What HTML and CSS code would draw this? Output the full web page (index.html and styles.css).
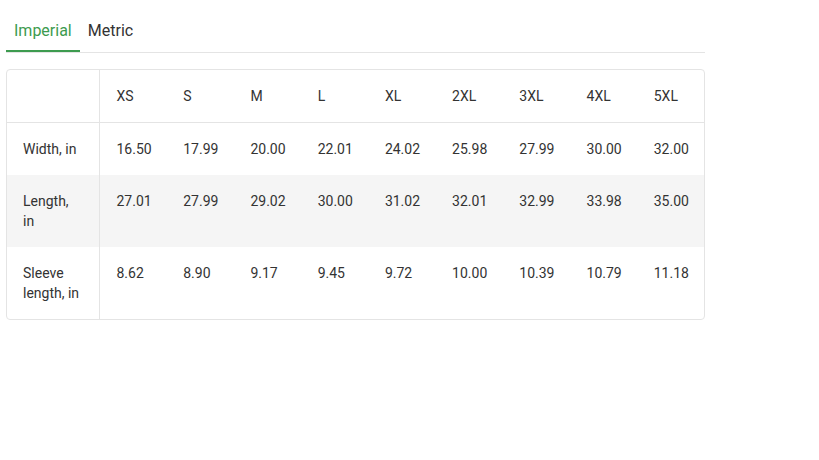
FILE: index.html
```html
<!DOCTYPE html>
<html>
<head>
<meta charset="utf-8">
<link rel="stylesheet" href="styles.css">
</head>
<body>
<div class="wrap">
  <div class="tabs">
    <div class="tab active">Imperial</div>
    <div class="tab">Metric</div>
  </div>
  <div class="card">
    <table class="sizes">
      <colgroup><col class="c-label"><col><col><col><col><col><col><col><col><col></colgroup>
      <thead>
        <tr><th class="label"></th><th>XS</th><th>S</th><th>M</th><th>L</th><th>XL</th><th>2XL</th><th>3XL</th><th>4XL</th><th>5XL</th></tr>
      </thead>
      <tbody>
        <tr><td class="label">Width, in</td><td>16.50</td><td>17.99</td><td>20.00</td><td>22.01</td><td>24.02</td><td>25.98</td><td>27.99</td><td>30.00</td><td>32.00</td></tr>
        <tr class="alt"><td class="label">Length,<br>in</td><td>27.01</td><td>27.99</td><td>29.02</td><td>30.00</td><td>31.02</td><td>32.01</td><td>32.99</td><td>33.98</td><td>35.00</td></tr>
        <tr><td class="label">Sleeve<br>length, in</td><td>8.62</td><td>8.90</td><td>9.17</td><td>9.45</td><td>9.72</td><td>10.00</td><td>10.39</td><td>10.79</td><td>11.18</td></tr>
      </tbody>
    </table>
  </div>
</div>
</body>
</html>
```
FILE: styles.css
```css
html, body {
  margin: 0;
  padding: 0;
  background: #fff;
}
body {
  font-family: Roboto, "Liberation Sans", Arial, sans-serif;
  color: #333;
}
.wrap {
  width: 699px;
  margin-left: 6px;
}
.tabs {
  display: flex;
  border-bottom: 1px solid #e4e4e4;
  height: 52px;
}
.tab {
  font-size: 16px;
  line-height: 20px;
  padding: 21px 8px 0;
  height: 29px;
  color: #333;
}
.tab.active {
  color: #3d9b4f;
  border-bottom: 2px solid #3d9b4f;
  margin-bottom: -1px;
}
.card {
  margin-top: 16px;
  border: 1px solid #e4e4e4;
  border-radius: 4px;
  overflow: hidden;
}
.sizes {
  width: 100%;
  border-collapse: collapse;
  table-layout: fixed;
  font-size: 14px;
  line-height: 20px;
}
.c-label {
  width: 92px;
}
.sizes th, .sizes td {
  padding: 16px 0 16px 17px;
  text-align: left;
  vertical-align: top;
  font-weight: normal;
  color: #333;
}
.sizes thead th {
  border-bottom: 1px solid #e4e4e4;
}
.sizes .label {
  padding-left: 16px;
  border-right: 1px solid #e4e4e4;
}
.sizes tr.alt td {
  background: #f5f5f5;
}
```
